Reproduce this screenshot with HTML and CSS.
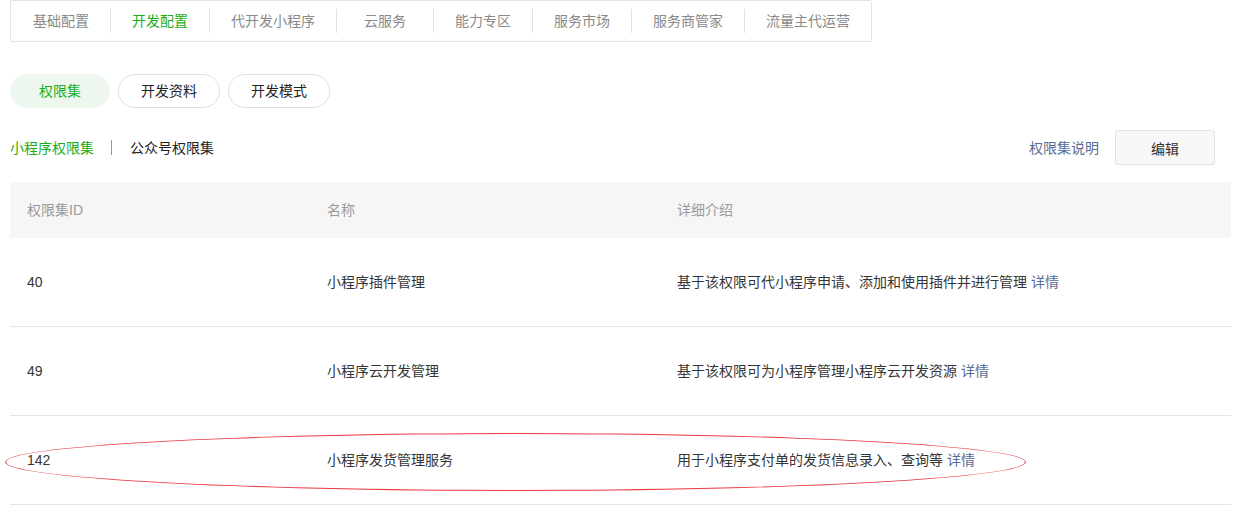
FILE: index.html
```html
<!DOCTYPE html>
<html lang="zh-CN">
<head>
<meta charset="utf-8">
<title>开发配置 - 权限集</title>
<link rel="stylesheet" href="styles.css">
</head>
<body>
<div class="page">
  <nav class="topnav">
    <a class="topnav-item">基础配置</a>
    <a class="topnav-item active">开发配置</a>
    <a class="topnav-item">代开发小程序</a>
    <a class="topnav-item">云服务</a>
    <a class="topnav-item">能力专区</a>
    <a class="topnav-item">服务市场</a>
    <a class="topnav-item">服务商管家</a>
    <a class="topnav-item">流量主代运营</a>
  </nav>

  <div class="pills">
    <a class="pill active">权限集</a>
    <a class="pill">开发资料</a>
    <a class="pill">开发模式</a>
  </div>

  <div class="subbar">
    <div class="subtabs">
      <a class="subtab active">小程序权限集</a>
      <span class="subsep"></span>
      <a class="subtab">公众号权限集</a>
    </div>
    <div class="subactions">
      <a class="link">权限集说明</a>
      <button class="btn">编辑</button>
    </div>
  </div>

  <div class="table">
    <div class="row head">
      <div class="c1">权限集ID</div>
      <div class="c2">名称</div>
      <div class="c3">详细介绍</div>
    </div>
    <div class="row">
      <div class="c1">40</div>
      <div class="c2">小程序插件管理</div>
      <div class="c3">基于该权限可代小程序申请、添加和使用插件并进行管理 <a class="link">详情</a></div>
    </div>
    <div class="row">
      <div class="c1">49</div>
      <div class="c2">小程序云开发管理</div>
      <div class="c3">基于该权限可为小程序管理小程序云开发资源 <a class="link">详情</a></div>
    </div>
    <div class="row marked">
      <div class="c1">142</div>
      <div class="c2">小程序发货管理服务</div>
      <div class="c3">用于小程序支付单的发货信息录入、查询等 <a class="link">详情</a></div>
      <span class="ring"></span>
    </div>
  </div>
</div>
</body>
</html>
```

FILE: styles.css
```css
* { box-sizing: border-box; }
html, body { margin: 0; padding: 0; background: #fff; }
body {
  font-family: "Liberation Sans", "Noto Sans CJK SC", sans-serif;
  font-size: 14px;
  color: #353535;
  line-height: 20px;
}
a { text-decoration: none; cursor: pointer; }

.page { padding: 0 18px 0 10px; }

.topnav {
  display: inline-flex;
  align-items: center;
  height: 42px;
  border: 1px solid #e3e3e3;
  border-radius: 2px;
  padding: 0;
}
.topnav-item {
  color: #8a8a8a;
  padding: 2px 21px;
  min-width: 97px;
  text-align: center;
  line-height: 20px;
}
.topnav-item:first-child { padding-left: 22px; }
.topnav-item + .topnav-item { border-left: 1px solid #e1e1e1; }
.topnav-item.active { color: #1aad19; }

.pills {
  display: flex;
  gap: 8px;
  margin-top: 32px;
}
.pill {
  display: flex;
  align-items: center;
  justify-content: center;
  height: 34px;
  width: 102px;
  border: 1px solid #e0e0e0;
  border-radius: 17px;
  color: #222;
}
.pill.active {
  width: 100px;
  border-color: #eef7ee;
  background: #eef7ee;
  color: #1aad19;
}

.subbar {
  display: flex;
  justify-content: space-between;
  align-items: center;
  margin-top: 22px;
  padding-right: 16px;
  height: 35px;
}
.subtabs { display: flex; align-items: center; }
.subtab { color: #222; }
.subtab.active { color: #1aad19; }
.subsep {
  width: 1px;
  height: 15px;
  background: #7b9cc7;
  margin: 0 18px 0 17px;
}
.subactions { display: flex; align-items: center; gap: 16px; }
.link { color: #576b95; }
.btn {
  width: 100px;
  height: 35px;
  border: 1px solid #e2e2e2;
  border-radius: 3px;
  background: #f8f8f8;
  font-family: inherit;
  font-size: 14px;
  font-weight: 400;
  color: #333;
  padding: 0;
}

.table { margin-top: 17px; }
.row {
  display: flex;
  align-items: center;
  height: 89px;
  border-bottom: 1px solid #e5e5e5;
  position: relative;
}
.row.head {
  height: 56px;
  background: #f6f6f6;
  border-bottom: 0;
  color: #9a9a9a;
}
.c1 { width: 300px; padding-left: 17px; }
.c2 { width: 350px; padding-left: 17px; }
.c3 { flex: 1; padding-left: 17px; }

.ring {
  position: absolute;
  left: -5px;
  top: 17px;
  width: 1021px;
  height: 58px;
  border: 1.5px solid #ea3a40;
  border-radius: 50%;
  pointer-events: none;
}
```
